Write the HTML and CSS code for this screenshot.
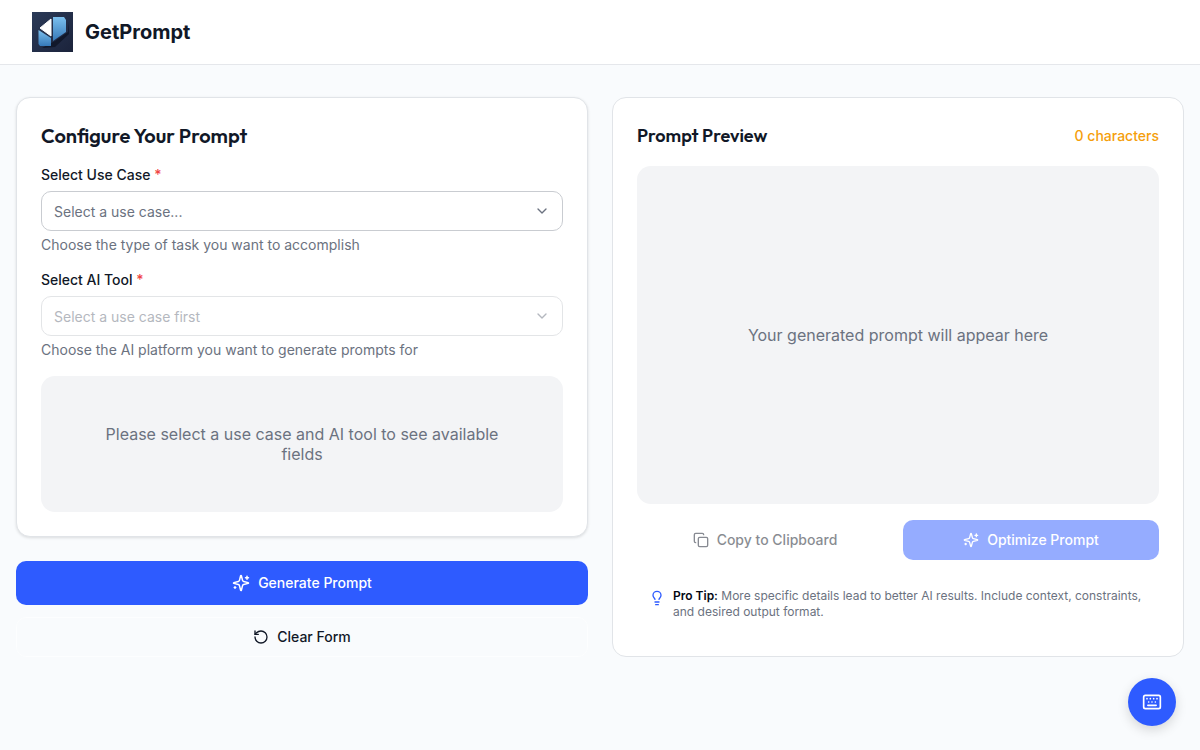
FILE: index.html
```html
<!DOCTYPE html>
<html lang="en">
<head>
    <meta charset="UTF-8">
    <meta name="viewport" content="width=device-width, initial-scale=1.0">
    <title>GetPrompt</title>
    <link rel="stylesheet" href="styles.css">
</head>
<body>
    <!-- Shared icons -->
    <svg class="sprite" aria-hidden="true">
        <symbol id="chevron" viewBox="0 0 24 24"><path d="m6 9 6 6 6-6"/></symbol>
        <symbol id="sparkles" viewBox="0 0 24 24">
            <path d="M9.937 15.500A2 2 0 0 0 8.500 14.063l-6.135-1.582a.5.5 0 0 1 0-.962L8.500 9.936A2 2 0 0 0 9.937 8.500l1.582-6.135a.5.5 0 0 1 .963 0L14.063 8.500A2 2 0 0 0 15.500 9.937l6.135 1.581a.5.5 0 0 1 0 .964L15.500 14.063a2 2 0 0 0-1.437 1.437l-1.582 6.135a.5.5 0 0 1-.963 0z"/>
            <path d="M20 3v4M22 5h-4M4 17v2M5 18H3"/>
        </symbol>
    </svg>

    <header class="site-header">
        <svg class="logo" viewBox="0 0 41 40" aria-hidden="true">
            <defs>
                <linearGradient id="logoBg" x1="0" y1="0" x2="1" y2="1">
                    <stop offset="0" stop-color="#2b3a58"/>
                    <stop offset="1" stop-color="#1b233b"/>
                </linearGradient>
                <linearGradient id="logoBlue" x1="0" y1="0" x2="0" y2="1">
                    <stop offset="0" stop-color="#7cc0ee"/>
                    <stop offset="1" stop-color="#3679b9"/>
                </linearGradient>
            </defs>
            <rect width="41" height="40" fill="url(#logoBg)"/>
            <path d="M23 29 36 20 37 10 37 22 23 35 10 36z" fill="#11182b"/>
            <path d="M21 5h11l2 3v12L21 29z" fill="url(#logoBlue)"/>
            <path d="M6.500 18 19 26v8H8l-1.500-2z" fill="url(#logoBlue)"/>
            <path d="M19 7v17L8 16z" fill="#fff" stroke="#fff" stroke-linejoin="round"/>
        </svg>
        <span class="brand">GetPrompt</span>
    </header>

    <main class="layout">
        <form class="config" id="promptForm">
            <section class="card config-card">
                <h2>Configure Your Prompt</h2>

                <div class="field">
                    <label for="useCase">Select Use Case <span class="required">*</span></label>
                    <div class="select-wrap">
                        <select id="useCase">
                            <option value="">Select a use case...</option>
                        </select>
                        <svg class="icon chevron" aria-hidden="true"><use href="#chevron"/></svg>
                    </div>
                    <p class="hint">Choose the type of task you want to accomplish</p>
                </div>

                <div class="field">
                    <label for="aiTool">Select AI Tool <span class="required">*</span></label>
                    <div class="select-wrap disabled">
                        <select id="aiTool" disabled>
                            <option value="">Select a use case first</option>
                        </select>
                        <svg class="icon chevron" aria-hidden="true"><use href="#chevron"/></svg>
                    </div>
                    <p class="hint">Choose the AI platform you want to generate prompts for</p>
                </div>

                <div class="empty-box">Please select a use case and AI tool to see available fields</div>
            </section>

            <div class="form-actions">
                <button type="submit" class="btn btn-primary btn-large">
                    <svg class="icon" aria-hidden="true"><use href="#sparkles"/></svg>
                    Generate Prompt
                </button>
                <button type="reset" class="btn btn-outline">
                    <svg class="icon" viewBox="0 0 24 24" aria-hidden="true"><path d="M3 12a9 9 0 1 0 9-9 9.750 9.750 0 0 0-6.740 2.740L3 8"/><path d="M3 3v5h5"/></svg>
                    Clear Form
                </button>
            </div>
        </form>

        <section class="card preview-card">
            <div class="preview-header">
                <h3>Prompt Preview</h3>
                <span class="char-count">0 characters</span>
            </div>

            <div class="empty-box preview-box">Your generated prompt will appear here</div>

            <div class="preview-actions">
                <button type="button" class="btn" disabled>
                    <svg class="icon" viewBox="0 0 24 24" aria-hidden="true"><rect x="8" y="8" width="14" height="14" rx="2"/><path d="M4 16c-1.100 0-2-.9-2-2V4c0-1.100.9-2 2-2h10c1.100 0 2 .9 2 2"/></svg>
                    Copy to Clipboard
                </button>
                <button type="button" class="btn btn-primary" disabled>
                    <svg class="icon" aria-hidden="true"><use href="#sparkles"/></svg>
                    Optimize Prompt
                </button>
            </div>

            <div class="tip">
                <svg class="icon tip-icon" viewBox="0 0 24 24" aria-hidden="true"><path d="M15 14c.2-1 .7-1.700 1.500-2.500 1-.9 1.500-2.200 1.500-3.500A6 6 0 0 0 6 8c0 1 .2 2.200 1.500 3.500.7.7 1.300 1.500 1.500 2.500"/><path d="M9 18h6M10 22h4"/></svg>
                <p><strong>Pro Tip:</strong> More specific details lead to better AI results. Include context, constraints, and desired output format.</p>
            </div>
        </section>
    </main>

    <button type="button" class="shortcuts" aria-label="Keyboard shortcuts">
        <svg class="icon" viewBox="0 0 24 24" aria-hidden="true"><rect x="2" y="4" width="20" height="16" rx="2"/><path d="M6 8h.01M10 8h.01M14 8h.01M18 8h.01M8 12h.01M12 12h.01M16 12h.01M7 16h10"/></svg>
    </button>
</body>
</html>
```
FILE: styles.css
```css
* {
    margin: 0;
    padding: 0;
    box-sizing: border-box;
}

body {
    min-height: 100vh;
    font-family: Inter, sans-serif;
    font-size: 14px;
    line-height: 20px;
    color: #111827;
    background: #f9fbfd;
}

button,
select {
    font: inherit;
    color: inherit;
}

.sprite {
    display: none;
}

.icon {
    flex: none;
    width: 16px;
    height: 16px;
    fill: none;
    stroke: currentColor;
    stroke-width: 2;
    stroke-linecap: round;
    stroke-linejoin: round;
}

/* Header */
.site-header {
    display: flex;
    align-items: center;
    gap: 12px;
    padding: 12px 32px;
    background: #fff;
    border-bottom: 1px solid #e5e7eb;
}

.logo {
    width: 41px;
    height: 40px;
}

.brand {
    font-size: 20px;
    line-height: 28px;
    font-weight: 700;
}

/* Layout */
.layout {
    display: grid;
    grid-template-columns: 1fr 1fr;
    gap: 24px;
    padding: 32px 16px;
}

.config {
    display: flex;
    flex-direction: column;
    gap: 24px;
}

.card {
    display: flex;
    flex-direction: column;
    gap: 16px;
    padding: 24px;
    background: #fff;
    border: 1px solid #e1e4e8;
    border-radius: 14px;
}

.config-card {
    box-shadow: 0 1px 3px rgba(0, 0, 0, 0.12);
}

h2,
h3 {
    font-family: Outfit, Lato, sans-serif;
    font-size: 20px;
    line-height: 28px;
    font-weight: 600;
}

h3 {
    font-size: 18px;
}

/* Fields */
label {
    display: block;
    margin-bottom: 8px;
    line-height: 17px;
    font-weight: 500;
}

.required {
    color: #ef4444;
}

.select-wrap {
    position: relative;
}

.select-wrap.disabled {
    opacity: 0.5;
}

select {
    display: block;
    width: 100%;
    height: 40px;
    padding: 2px 36px 0 12px;
    appearance: none;
    color: #6b7280;
    background: #fff;
    border: 1px solid #c9ccd1;
    border-radius: 10px;
}

select:disabled {
    opacity: 1;
}

.chevron {
    position: absolute;
    top: 12px;
    right: 13px;
    color: #6b7280;
    pointer-events: none;
}

.hint {
    margin-top: 4px;
    color: #6b7280;
}

.empty-box {
    padding: 48px;
    font-size: 16px;
    text-align: center;
    color: #6b7280;
    background: #f3f4f6;
    border-radius: 14px;
}

/* Buttons */
.form-actions {
    display: grid;
    gap: 12px;
}

.btn {
    display: flex;
    align-items: center;
    justify-content: center;
    gap: 8px;
    height: 40px;
    font-weight: 500;
    background: transparent;
    border: none;
    border-radius: 10px;
    cursor: pointer;
}

.btn:disabled {
    opacity: 0.5;
    cursor: default;
}

.btn-primary {
    color: #fff;
    background: #2e5bff;
}

.btn-large {
    height: 44px;
}

.btn-large .icon {
    width: 18px;
    height: 18px;
}

.btn-outline {
    border: 1px solid #fdfeff;
}

/* Preview */
.preview-header {
    display: flex;
    align-items: center;
    justify-content: space-between;
}

.char-count {
    font-weight: 500;
    color: #f59e0b;
}

.preview-box {
    flex: 1;
    display: flex;
    align-items: center;
    justify-content: center;
}

.preview-actions {
    display: grid;
    grid-template-columns: 1fr 1fr;
    gap: 10px;
}

.tip {
    display: flex;
    gap: 8px;
    padding: 12px;
    font-size: 12px;
    line-height: 16px;
    color: #6b7280;
}

.tip-icon {
    margin-top: 2px;
    color: #2e5bff;
}

.tip strong {
    font-weight: 600;
    color: #030712;
}

.shortcuts {
    position: fixed;
    right: 24px;
    bottom: 24px;
    display: flex;
    align-items: center;
    justify-content: center;
    width: 48px;
    height: 48px;
    color: #fff;
    background: #2e5bff;
    border: none;
    border-radius: 50%;
    box-shadow: 0 4px 12px rgba(0, 0, 0, 0.15);
    cursor: pointer;
}

.shortcuts .icon {
    width: 20px;
    height: 20px;
}

@media (max-width: 768px) {
    .layout {
        grid-template-columns: 1fr;
    }
}
```
